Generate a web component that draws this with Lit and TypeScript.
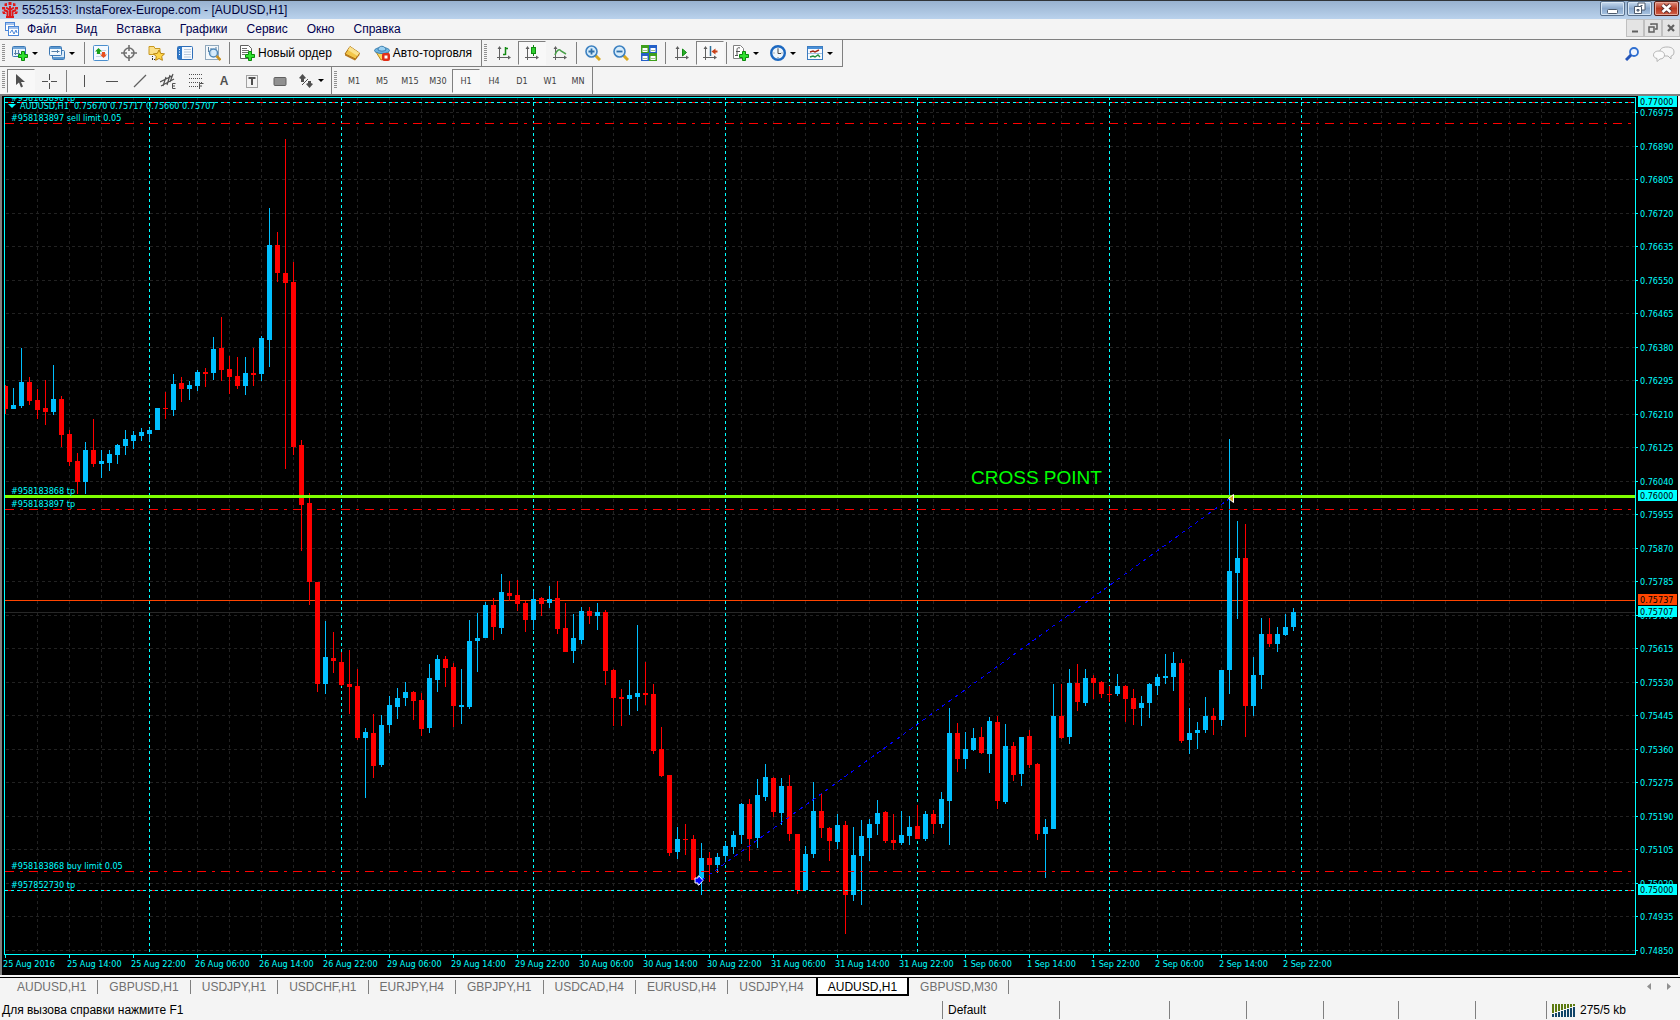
import { LitElement, html, svg, css, type SVGTemplateResult, type TemplateResult } from "lit";
import { customElement, state } from "lit/decorators.js";
import { classMap } from "lit/directives/class-map.js";

/* ---------- chart data ---------- */

/** Window row of the first pixel inside the plot frame. */
const TOP = 98;
/** Window column of the first pixel inside the plot frame. */
const LEFT = 5;
const STEP = 8;

/** kind (U rising, D falling), high, body top, body bottom, low */
const CANDLES = `
D385,386,409,414 U388,405,409,409 U348,382,406,408 D377,382,401,405 D389,400,410,419 D380,408,412,425
U365,399,412,415 D396,399,435,447 D430,434,462,466 D453,461,482,494 U442,450,482,494 D419,450,464,467
U450,461,464,478 U450,454,463,471 U444,445,455,464 U430,439,446,455 U431,435,441,449 U428,432,436,441
U428,430,434,441 U408,408,430,430 D392,408,409,419 U374,384,410,416 D377,383,389,402 U381,385,389,400
U370,372,386,391 D368,372,374,387 U337,349,373,380 D317,348,370,381 D356,369,377,394 D357,376,386,389
U357,373,386,395 D348,373,375,386 U336,338,374,381 U208,245,340,367 D232,245,273,282 D139,273,283,469
D262,282,447,455 D440,445,505,551 D493,503,582,605 D582,582,684,692 U621,657,684,694 D632,658,661,673
D652,662,685,686 D650,684,687,714 D669,686,738,740 U728,732,738,798 D714,733,766,778 U715,725,765,767
U696,705,725,733 U688,698,707,719 U682,692,698,706 D691,692,701,720 D693,700,729,736 U664,678,728,733
U655,659,680,692 D656,659,668,687 D663,667,706,727 U669,705,707,724 U620,641,707,709 U613,638,641,672
U602,605,638,638 D598,605,627,640 U574,592,628,634 D581,593,596,601 D580,595,604,611 D601,603,620,632
U591,599,620,630 D597,598,604,616 U586,599,603,608 D581,598,629,634 D603,628,652,652 U614,638,651,663
U607,611,640,644 D607,611,616,624 U603,612,616,630 D610,612,671,685 D669,670,698,726 D689,697,699,726
U680,695,699,715 U625,693,697,711 D662,693,695,705 D684,694,751,754 D727,749,776,777 D775,775,853,856
U827,839,852,859 D824,839,840,855 D835,839,880,880 U843,858,879,895 D852,858,865,882 U853,857,865,873
U842,846,856,862 U831,835,847,854 U803,804,835,844 D799,804,839,861 U779,795,838,848 U764,777,797,801
D777,778,812,817 U778,786,813,825 D775,786,834,841 D834,834,890,894 U846,854,890,890 U782,811,854,858
D794,811,828,838 D827,828,841,861 U814,825,842,849 D821,825,895,934 U827,855,895,901 U820,836,856,905
U819,824,838,861 U800,813,824,835 D811,812,841,843 D814,840,843,850 U811,835,843,845 U816,827,836,845
D805,826,839,839 U811,814,839,841 D810,814,824,834 U792,799,824,828 U708,733,801,845 D723,733,759,772
U732,749,759,769 U728,738,750,751 D727,737,753,754 U717,721,754,773 D716,722,801,809 U724,746,802,804
D742,746,775,781 U737,737,774,786 D730,736,765,768 D763,764,834,840 U819,827,834,878 U684,716,829,829
D684,716,738,739 U669,683,737,744 D664,683,702,711 U669,678,703,706 D675,678,683,699 D681,682,694,698
D686,694,695,702 U674,686,694,696 D685,686,699,722 D689,698,709,725 U696,703,708,726 U683,684,703,718
U674,677,686,695 U654,676,678,684 U652,663,677,691 D659,663,741,743 U708,733,740,754 U722,730,733,749
U697,716,730,733 D708,716,720,735 U670,670,720,726 U439,571,670,694 U521,558,573,619 D524,558,706,737
U657,675,706,716 U618,634,675,689 D618,634,644,647 U627,634,644,652 U614,627,635,636 U608,612,627,631`
  .trim()
  .split(/\s+/)
  .map((item) => ({ up: item[0] === "U", v: item.slice(1).split(",").map(Number) }));

const GRID_ROWS = Array.from({ length: 26 }, (_, k) => ({
  y: Math.ceil(112 + 33.5 * k) - TOP,
  price: (0.76975 - 0.00085 * k).toFixed(5),
}));
const GRID_COLUMNS = Array.from({ length: 80 }, (_, k) => 32 * k);
const DAY_BREAKS = [149, 341, 533, 725, 917, 1109, 1301];
const TIMES = [
  "25 Aug 2016", "25 Aug 14:00", "25 Aug 22:00", "26 Aug 06:00", "26 Aug 14:00", "26 Aug 22:00",
  "29 Aug 06:00", "29 Aug 14:00", "29 Aug 22:00", "30 Aug 06:00", "30 Aug 14:00", "30 Aug 22:00",
  "31 Aug 06:00", "31 Aug 14:00", "31 Aug 22:00", "1 Sep 06:00", "1 Sep 14:00", "1 Sep 22:00",
  "2 Sep 06:00", "2 Sep 14:00", "2 Sep 22:00",
];
const ORDER_LINES = [102, 123, 509, 871, 890];
const LEVEL_LINES = [102, 890];
const ORDER_LABELS: [number, string][] = [
  [101, "#958183898 tp"],
  [121, "#958183897 sell limit 0.05"],
  [494, "#958183868 tp"],
  [507, "#958183897 tp"],
  [869, "#958183868 buy limit 0.05"],
  [888, "#957852730 tp"],
];
const TAGS: [number, string, string][] = [
  [102, "0.77000", "level"],
  [496, "0.76000", "level"],
  [600, "0.75737", "ask"],
  [612, "0.75707", "level"],
  [890, "0.75000", "level"],
];

/* ---------- icons ---------- */

const icon = (body: SVGTemplateResult, w = 16, h = 16) =>
  html`<svg class="icon" width=${w} height=${h} viewBox="0 0 ${w} ${h}" aria-hidden="true">${body}</svg>`;

const plus = svg`<path d="M9.5 6.5h3v3h3v3h-3v3h-3v-3h-3v-3h3z" fill="#2fe02f" stroke="#0a8a0a"/>`;
const axes = svg`<path d="M3.5 2v13M1 12.500h13" stroke="#606060" fill="none"/><path d="M3.500 1l-2 3h4zM15 12.500l-3-2v4z" fill="#606060"/>`;

const ICONS: Record<string, TemplateResult> = {
  logo: icon(svg`<g fill="none" stroke="#e01818" stroke-width="2"><path d="M8 4v11M8 8L4 5.500M8 8l4-2.500M5.500 15V9.500L2 8M10.500 15V9.500L14 8"/></g><path d="M6.500 0h3v3h-3zM2.500 1.500L5 1v3H2.500zM11 1l2.500.5V4H11zM0 5h3v2.500H0zM13 5h3v2.500h-3zM0 9.500h2.500L4 12H1zM13.500 9.500H16L15 12h-3zM4 14h8v2H4z" fill="#e01818"/>`),
  sheet: icon(svg`<rect x="1.500" y="1.500" width="9" height="8" fill="#fff" stroke="#4a86d8"/><path d="M2 3h8" stroke="#4a86d8"/><rect x="4.500" y="5.500" width="10" height="9" fill="#fff" stroke="#4a86d8"/><path d="M5 7h9" stroke="#4a86d8"/><path d="M6 12l2-3 2 4 2-4 1 3" stroke="#4a86d8" fill="none"/>`),
  newChart: icon(svg`<rect x=".5" y="1.500" width="13" height="10" rx="1" fill="#e8f3fc" stroke="#3c78b4"/><path d="M1 3h12" stroke="#6fa5d8" stroke-width="2"/><path d="M3.500 5v5M2 8.500h6M6.500 5v3" stroke="#5580a8" fill="none"/>${plus}`),
  profiles: icon(svg`<rect x="3.500" y="5.500" width="12" height="9" rx="1" fill="#dcebf8" stroke="#3c78b4"/><path d="M4 13h11" stroke="#5b98d0" stroke-width="2"/><rect x=".5" y="1.500" width="12" height="9" rx="1" fill="#f2f8fd" stroke="#3c78b4"/><path d="M1 3h11" stroke="#5b98d0" stroke-width="2"/><path d="M2.500 6.500h8M8.500 5v3" stroke="#5580a8"/>`),
  market: icon(svg`<rect x=".5" y=".5" width="15" height="15" rx="1" fill="#f4f9ff" stroke="#4b8fce"/><path d="M3 5.500h10M3 8.500h10M3 11.500h10" stroke="#c5d6e8"/><path d="M5.500 3L9 6.500H7V9H4V6.500H2z" fill="#18a018"/><path d="M10.500 13L7 9.500h2V7h3v2.500h2z" fill="#e85020"/>`),
  cross: icon(svg`<circle cx="8" cy="8" r="5" fill="none" stroke="#707070" stroke-width="1.600"/><path d="M8 0v6M8 10v6M0 8h6M10 8h6" stroke="#707070" stroke-width="1.600"/>`),
  folder: icon(svg`<path d="M1 3.500V1.500h5l1 2h5v6H1z" fill="#fbe08a" stroke="#c89820"/><path d="M4.500 11v4M4 14.500h4" stroke="#333" stroke-dasharray="1 1"/><path d="M11 5l1.700 3.400 3.800.5-2.800 2.600.7 3.800L11 13.500 7.600 15.300l.7-3.800L5.500 8.900l3.800-.5z" fill="#ffd648" stroke="#b88410"/>`, 18),
  navigator: icon(svg`<rect x=".5" y="1.500" width="15" height="13" rx="1" fill="#f6faff" stroke="#2f6fb8"/><rect x="1" y="2" width="4" height="12" fill="#2f78c8"/><path d="M7 4.500h7M7 7h7M7 9.500h7M7 12h7" stroke="#b9c8da"/><path d="M2 4.500h1M2 7h1M2 9.500h1" stroke="#fff"/>`),
  tester: icon(svg`<rect x=".5" y=".5" width="13" height="14" fill="#f4f8fb" stroke="#90a8bc"/><path d="M3.500 2v5M6 3v7M11 2v4" stroke="#5a7fa0"/><circle cx="8.500" cy="8" r="4" fill="#cfe8fa" fill-opacity=".85" stroke="#5088b8" stroke-width="1.500"/><path d="M11.500 11l4 4" stroke="#c89020" stroke-width="2.500"/>`),
  order: icon(svg`<path d="M1.500.5h8l3 3v10h-11z" fill="#fff" stroke="#606060"/><path d="M3 3.500h5M3 5.500h7M3 7.500h6M3 9.500h3" stroke="#707070"/>${plus}`),
  editor: icon(svg`<path d="M1 9L6 1.500l9.500 6.500-4 6z" fill="#f3c648" stroke="#a86c10"/><path d="M6 1.500l9.500 6.500-2 3L4 5z" fill="#fbe28c"/><path d="M1 9v1.500L11 15.500l.5-1.500zM11.500 14l4-6v2L11 15.500z" fill="#b87818"/>`, 17),
  auto: icon(svg`<path d="M2 7l5 8 8-3-1-6z" fill="#fbd65c" stroke="#b88818"/><ellipse cx="8" cy="5.500" rx="7.500" ry="3" fill="#6db4e0" stroke="#3a7fb0"/><path d="M4 5c0-5 7.500-5 8 0-2 1.500-6 1.500-8 0z" fill="#9bd0f0" stroke="#3a7fb0"/><rect x="8" y="8" width="8" height="8" rx="2" fill="#e03018"/><rect x="10.500" y="10.500" width="3" height="3" fill="#fff"/>`),
  bars: icon(svg`${axes}<path d="M9.500 2v8M9.500 3.500H12M7 9.500h2.500" stroke="#128a12" stroke-width="1.500" fill="none"/>`),
  candles: icon(svg`${axes}<path d="M9.500 0v11" stroke="#128a12"/><rect x="7.500" y="2.500" width="4" height="6" fill="#2fd02f" stroke="#128a12"/>`),
  line: icon(svg`${axes}<path d="M3 10c2-6 5-6 6-4l5 3" stroke="#4aa04a" stroke-width="1.500" fill="none"/>`),
  zoomIn: icon(svg`<path d="M10 10l5 5" stroke="#d8a820" stroke-width="3"/><circle cx="6.500" cy="6.500" r="5.500" fill="#d6ecfb" stroke="#3c80c0" stroke-width="1.600"/><path d="M3.500 6.500h6M6.500 3.500v6" stroke="#2f6fa8" stroke-width="1.800"/>`),
  zoomOut: icon(svg`<path d="M10 10l5 5" stroke="#d8a820" stroke-width="3"/><circle cx="6.500" cy="6.500" r="5.500" fill="#d6ecfb" stroke="#3c80c0" stroke-width="1.600"/><path d="M3.500 6.500h6" stroke="#2f6fa8" stroke-width="1.800"/>`),
  tile: icon(svg`<rect width="8" height="8" fill="#3fa01c"/><rect x="8" width="8" height="8" fill="#2460c8"/><rect y="8" width="8" height="8" fill="#2460c8"/><rect x="8" y="8" width="8" height="8" fill="#3fa01c"/><path d="M1.500 3h5v4h-5zM9.500 3h5v4h-5zM1.500 11h5v4h-5zM9.500 11h5v4h-5z" fill="#fff"/><path d="M2 5.500h4M10 5.500h4M2 13.500h4M10 13.500h4" stroke="#9cc08c"/>`),
  scroll: icon(svg`${axes}<path d="M8.500 4l4 3.500-4 3.500z" fill="#28b028" stroke="#128a12"/>`),
  shift: icon(svg`${axes}<path d="M8.500 1v10" stroke="#2f6f98" stroke-width="1.500"/><path d="M9.500 6.500l4-3v2h2v2h-2v2z" fill="#c84018"/>`),
  indicators: icon(svg`<path d="M.5.5h7l3 3v10H.5z" fill="#fff" stroke="#808080"/><path d="M7 3c-3-1-3 1-3 3v4M3 6.500h4M5 10.500H2" stroke="#505050" fill="none"/>${plus}`),
  clock: icon(svg`<circle cx="8" cy="8" r="6.800" fill="#eef6fc" stroke="#1c68c0" stroke-width="2.400"/><path d="M8 4v4.500h3" stroke="#444" fill="none"/><path d="M8 3v1M8 12v1M3.500 8h1M11.500 8h1" stroke="#777"/>`),
  template: icon(svg`<rect x=".5" y="1.500" width="15" height="13" fill="#f8fbff" stroke="#3c7cc0"/><path d="M1 3h14" stroke="#4a90d8" stroke-width="2"/><path d="M3 7l3-1 2 1 4-2" stroke="#a02818" fill="none" stroke-width="1.400"/><path d="M1 8.500h14" stroke="#a0c0e0"/><path d="M3 12l3-1 2 1 3-2 2 2" stroke="#20903c" fill="none" stroke-width="1.400"/>`),
  find: icon(svg`<circle cx="9" cy="5" r="4" fill="#eef4ff" stroke="#2f6fd0" stroke-width="1.800"/><path d="M6 8l-5 5" stroke="#2454b8" stroke-width="3"/>`, 14, 14),
  chat: icon(svg`<path d="M14 1c5 0 7 2 7 5s-2 4-3 4v3l-3-3h-2c-4 0-6-2-6-4.500S9 1 14 1z" fill="#f6f6f6" stroke="#b4b4b4"/><path d="M6 5c4 0 5.500 2 5.500 4S10 13 7 13l-3 2.500V12.500C2 12 .5 11 .5 9S2 5 6 5z" fill="#fafafa" stroke="#b4b4b4"/>`, 22),
  pointer: icon(svg`<path d="M3 1v11l3-2.500 2 5 2-1-2-4.500h4z" fill="#505050"/>`),
  cursorCross: icon(svg`<path d="M8.500 1v6M8.500 10v6M1 8.500h6M10 8.500h6" stroke="#505050"/>`),
  vline: icon(svg`<path d="M8.500 2v12" stroke="#505050"/>`),
  hline: icon(svg`<path d="M2 8.500h12" stroke="#505050"/>`),
  trend: icon(svg`<path d="M2 14L14 2" stroke="#606060" stroke-width="1.300"/>`),
  channel: icon(svg`<path d="M0 9L12 3M1 13L14 6M3 13l3-9M7 12l3-10M10 9l3-8" stroke="#505050" stroke-width="1.200"/><path d="M15.500 10.500h-3v5h3M12.500 13H15" stroke="#505050" fill="none"/>`),
  fibo: icon(svg`<path d="M1 1.500h13M1 5.500h13M1 9.500h13M1 13.500h9" stroke="#505050" stroke-dasharray="1 1"/><path d="M15.500 10.500h-4V16M11.500 13H14" stroke="#505050" fill="none"/>`),
  label: icon(svg`<rect x="2.500" y="2.500" width="11" height="12" fill="none" stroke="#505050" stroke-dasharray="1 1"/><path d="M4.500 5h7M8 5v7" stroke="#505050" stroke-width="2"/>`),
  box: icon(svg`<rect x="2" y="4.500" width="12" height="8" rx="1" fill="#909090" stroke="#606060"/>`),
  arrows: icon(svg`<path d="M4.500 1l3.500 4-2 1v3H3V6L1 5zM11.500 15L8 11l2-1V8h3v2l2 1z" fill="#505050"/><path d="M4 12l6-6" stroke="#505050"/>`),
  signal: icon(svg`${[0, 1, 2, 3, 4, 5, 6, 7].map(
    (i) => svg`<rect x=${i * 3} y="0" width="2" height=${9 - i} fill="#5c7a10"/><rect x=${i * 3} y=${10 - i} width="2" height=${3 + i} fill="#104468"/>`,
  )}`, 23, 13),
  min: icon(svg`<rect x="1.500" y="7.500" width="10" height="4" rx="1" fill="#fff" stroke="#4c5a6c"/>`, 13, 13),
  restore: icon(svg`<path d="M5 1h7v7H5z" fill="#fff" stroke="#4c5a6c"/><path d="M7.500 3.500h2" stroke="#4c5a6c"/><path d="M1.500 4.500h7v7h-7z" fill="#fff" stroke="#4c5a6c"/><path d="M4 7.500h2v1.500H4z" fill="#8aa6c8" stroke="#4c5a6c"/>`, 13, 13),
  close: icon(svg`<path d="M2.500 3l8 7M10.500 3l-8 7" stroke="#5a3030" stroke-width="4.500"/><path d="M2.500 3l8 7M10.500 3l-8 7" stroke="#fff" stroke-width="2.600"/>`, 13, 13),
  mdiMin: icon(svg`<path d="M2 8.500h6" stroke="#606060" stroke-width="2"/>`, 10, 10),
  mdiRestore: icon(svg`<path d="M3 2V1h6v5H7" stroke="#606060" stroke-width="1.500" fill="none"/><rect x="1" y="4" width="5" height="5" stroke="#606060" stroke-width="1.500" fill="none"/>`, 10, 10),
  mdiClose: icon(svg`<path d="M2 2l6 6M8 2L2 8" stroke="#606060" stroke-width="2.200"/>`, 10, 10),
};

const caret = html`<svg class="caret" width="6" height="3" viewBox="0 0 6 3" aria-hidden="true"><path d="M0 0h6L3 3z" fill="#000" /></svg>`;

type Tool = { id: string; name: string; text?: string; menu?: boolean; on?: boolean };
const SEP: Tool = { id: "|", name: "" };
const t = (id: string, name: string, more: Partial<Tool> = {}): Tool => ({ id, name, ...more });

const STANDARD: Tool[] = [
  t("newChart", "Новый график", { menu: true }),
  t("profiles", "Профили", { menu: true }),
  SEP,
  t("market", "Обзор рынка"),
  t("cross", "Окно данных"),
  t("folder", "Навигатор"),
  t("navigator", "Терминал"),
  t("tester", "Тестер стратегий"),
  SEP,
  t("order", "Новый ордер", { text: "Новый ордер" }),
  t("editor", "Редактор"),
  t("auto", "Авто-торговля", { text: "Авто-торговля" }),
];
const CHARTS: Tool[] = [
  t("bars", "Бары"),
  t("candles", "Свечи", { on: true }),
  t("line", "Линия"),
  SEP,
  t("zoomIn", "Приблизить"),
  t("zoomOut", "Отдалить"),
  t("tile", "Окна мозаикой"),
  SEP,
  t("scroll", "Автопрокрутка"),
  t("shift", "Сдвиг графика", { on: true }),
  SEP,
  t("indicators", "Индикаторы", { menu: true }),
  t("clock", "Периоды", { menu: true }),
  t("template", "Шаблоны", { menu: true }),
];
const DRAWING: Tool[] = [
  t("pointer", "Курсор", { on: true }),
  t("cursorCross", "Перекрестие"),
  SEP,
  t("vline", "Вертикальная линия"),
  t("hline", "Горизонтальная линия"),
  t("trend", "Трендовая линия"),
  t("channel", "Канал"),
  t("fibo", "Линии Фибоначчи"),
  t("A", "Текст", { text: "A" }),
  t("label", "Метка"),
  t("box", "Прямоугольник"),
  t("arrows", "Стрелки", { menu: true }),
];
const FRAMES = ["M1", "M5", "M15", "M30", "H1", "H4", "D1", "W1", "MN"];
const MENU = ["Файл", "Вид", "Вставка", "Графики", "Сервис", "Окно", "Справка"];
const TABS = [
  "AUDUSD,H1", "GBPUSD,H1", "USDJPY,H1", "USDCHF,H1", "EURJPY,H4", "GBPJPY,H1",
  "USDCAD,H4", "EURUSD,H4", "USDJPY,H4", "AUDUSD,H1", "GBPUSD,M30",
];

/* ---------- chart ---------- */

@customElement("price-chart")
export class PriceChart extends LitElement {
  static styles = css`
    :host {
      display: grid;
      grid-template-columns: minmax(0, 1fr) 42px;
      grid-template-rows: minmax(0, 1fr) 20px;
      background: #000;
      font: 9px "DejaVu Sans Condensed", "DejaVu Sans", sans-serif;
    }
    .plot {
      border: 1px solid #00ffff;
      overflow: hidden;
      min-height: 0;
    }
    svg {
      display: block;
      width: 100%;
      height: 100%;
      overflow: hidden;
    }
    .axis {
      overflow: visible;
    }
    .shapes {
      shape-rendering: crispEdges;
    }
    .grid {
      stroke: #222222;
      stroke-dasharray: 3 3;
    }
    .day {
      stroke: #00ffff;
      stroke-dasharray: 3 3;
    }
    .bid {
      stroke: #282828;
    }
    .ask-line {
      stroke: #ff4500;
    }
    .up {
      fill: #00bfff;
    }
    .down {
      fill: #ff0000;
    }
    .order {
      stroke: #ff0000;
      stroke-dasharray: 9 6 3 6;
    }
    .level-line {
      stroke: #00ffff;
      stroke-dasharray: 3 3;
    }
    .cross {
      fill: #7fff00;
    }
    .deal {
      stroke: #0000ff;
      stroke-dasharray: 4 4;
    }
    text {
      fill: #00ffff;
    }
    .note {
      fill: #00ff00;
      font: 19px "Liberation Sans", Arial, sans-serif;
    }
    .tick {
      stroke: #00ffff;
    }
    .level {
      fill: #00ffff;
    }
    .ask {
      fill: #ff4500;
    }
    .tag-text {
      fill: #000;
    }
  `;

  private row(y: number, cls: string, x = 0) {
    return svg`<line class=${cls} x1=${x} x2="100%" y1=${y + 0.5} y2=${y + 0.5} />`;
  }

  render() {
    return html`
      <div class="plot">
        <svg role="img" aria-label="AUDUSD,H1">
          <g class="shapes">
            ${GRID_ROWS.map((r) => this.row(r.y, "grid", 1))}
            ${GRID_COLUMNS.slice(1).map((x) => svg`<line class="grid" x1=${x + 0.5} x2=${x + 0.5} y1="-1" y2="100%" />`)}
            ${DAY_BREAKS.map((x) => svg`<line class="day" x1=${x - LEFT + 0.5} x2=${x - LEFT + 0.5} y1="-1" y2="100%" />`)}
            ${this.row(612 - TOP, "bid")} ${this.row(600 - TOP, "ask-line")}
            ${CANDLES.map(({ up, v: [high, top, bottom, low] }, i) => svg`
              <g class=${up ? "up" : "down"}>
                <rect x=${i * STEP} y=${high - TOP} width="1" height=${low - high} />
                <rect x=${i * STEP - 2} y=${top - TOP} width="5" height=${bottom - top} />
              </g>`)}
            ${ORDER_LINES.map((y) => this.row(y - TOP, "order"))}
            ${LEVEL_LINES.map((y) => this.row(y - TOP, "level-line"))}
            <rect class="cross" x="0" y=${495 - TOP} width="100%" height="3" />
            <line class="deal" x1="697" y1="782" x2="1224" y2="401" />
          </g>
          <path d="M690 780h3v-2h1l4 4.500-4 4.500h-1v-2h-3z" fill="#0000ff" stroke="#fff" />
          <path d="M1228.500 396.500v8l-5-4z" fill="#daa520" stroke="#fff" />
          <path d="M3 6h8L7 10z" fill="#00ffff" />
          <text x="15" y="11">AUDUSD,H1&nbsp; 0.75670 0.75717 0.75660 0.75707</text>
          ${ORDER_LABELS.map(([y, label]) => svg`<text x="6" y=${y - TOP}>${label}</text>`)}
          <text class="note" x="966" y="386">CROSS POINT</text>
        </svg>
      </div>
      <svg class="axis">
        ${GRID_ROWS.map((r) => svg`
          <line class="tick shapes" x1="0" x2="2" y1=${r.y + 1.5} y2=${r.y + 1.5} />
          <text x="4" y=${r.y + 5}>${r.price}</text>`)}
        ${TAGS.map(([y, label, cls]) => svg`
          <rect class=${cls} x="2" y=${y - 6 - TOP + 1} width="39" height="11" />
          <text class="tag-text" x="4" y=${y - TOP + 4}>${label}</text>`)}
      </svg>
      <svg class="axis">
        ${TIMES.map((label, k) => svg`
          <line class="tick shapes" x1=${k * 64 + 1.5} x2=${k * 64 + 1.5} y1="0" y2="3" />
          <text x=${k * 64 - 1} y="12">${label}</text>`)}
      </svg>
    `;
  }
}

/* ---------- terminal window ---------- */

@customElement("app-root")
export class AppRoot extends LitElement {
  @state() private tab = 9;
  @state() private frame = "H1";

  static styles = css`
    :host {
      display: flex;
      flex-direction: column;
      height: 100vh;
      min-height: 400px;
      overflow: hidden;
      background: #f4f4f4;
      color: #000;
      font: 12px "Liberation Sans", Arial, sans-serif;
    }
    button {
      display: inline-flex;
      align-items: center;
      justify-content: center;
      margin: 0;
      padding: 0;
      border: 0;
      background: none;
      color: inherit;
      font: inherit;
      white-space: nowrap;
    }
    .icon,
    .caret {
      display: block;
      flex: none;
    }
    .title {
      display: flex;
      align-items: center;
      gap: 4px;
      height: 18px;
      padding-left: 2px;
      border-top: 1px solid #303438;
      background: linear-gradient(#98b2d0, #bad2ec);
      color: #000038;
    }
    .window {
      display: flex;
      gap: 2px;
      margin-left: auto;
      padding-right: 1px;
      align-self: flex-start;
    }
    .window button {
      box-sizing: border-box;
      width: 25px;
      height: 15px;
      border: 1px solid #58708c;
      border-radius: 2px;
      background: linear-gradient(#c8dcf0, #8aa8cc 50%, #a8c4e2);
      box-shadow: inset 0 0 0 1px #d8e6f4;
    }
    .window .quit {
      border-color: #5c2018;
      background: linear-gradient(#e09080, #b83820 50%, #d06048);
      box-shadow: inset 0 0 0 1px #e8a898;
    }
    .menu {
      display: flex;
      align-items: center;
      gap: 1px;
      height: 20px;
      padding-left: 4px;
      border-bottom: 1px solid #808080;
      color: #000050;
    }
    .menu .item {
      padding: 0 9px;
    }
    .menu .icon {
      margin-right: -3px;
    }
    .mdi {
      display: flex;
      align-self: flex-start;
      margin-left: auto;
      background: #c0c0c0;
    }
    .mdi button {
      width: 16px;
      height: 16px;
      margin: 1px;
      background: #e4e4e4;
    }
    .menu .mdi .icon {
      margin: 0;
    }
    .bars {
      display: flex;
      height: 27px;
    }
    .bar {
      display: flex;
      align-items: center;
      box-sizing: border-box;
      padding: 0 2px 0 8px;
      border-right: 1px solid #808080;
      border-bottom: 1px solid #808080;
      background: repeating-linear-gradient(#909090 0 1px, #f4f4f4 1px 2px) 2px 4px / 3px 18px no-repeat;
    }
    .lower {
      border-bottom: 2px solid #808080;
    }
    .lower .bar {
      padding-right: 0;
      border-bottom: 0;
    }
    .lower .bar:first-child {
      padding-left: 7px;
    }
    .lower .sep {
      margin: 0 3px;
    }
    .corner {
      display: flex;
      align-items: center;
      gap: 14px;
      margin-left: auto;
      padding-right: 5px;
    }
    .tool {
      box-sizing: border-box;
      width: 28px;
      height: 24px;
      border: 1px solid transparent;
    }
    .with-menu {
      justify-content: flex-start;
      gap: 4px;
      width: 37px;
      padding-left: 3px;
    }
    .with-text {
      gap: 3px;
      width: auto;
      padding: 0 6px;
    }
    .glyph {
      width: 28px;
      padding: 0;
      color: #505050;
      font-weight: bold;
    }
    .on {
      border-color: #808080 transparent transparent #808080;
      background: #f8f8f8;
    }
    .sep {
      flex: none;
      width: 1px;
      height: 22px;
      margin: 0 2px;
      background: #808080;
    }
    .frame {
      color: #404040;
      font: 9px "DejaVu Sans Condensed", "DejaVu Sans", sans-serif;
    }
    .view {
      flex: 1;
      min-height: 0;
      display: flex;
      box-sizing: border-box;
      padding: 1px 0 0 2px;
      margin-right: 2px;
      border-left: 2px solid #808080;
      background: #000;
    }
    price-chart {
      flex: 1;
      min-width: 0;
    }
    .tabs {
      display: flex;
      align-items: flex-start;
      height: 21px;
      margin-top: 2px;
      padding-left: 6px;
      border-top: 1px solid #000;
      color: #707070;
    }
    .tab {
      position: relative;
      height: 17px;
      padding: 0 12px 0 11px;
    }
    .tab::after {
      content: "";
      position: absolute;
      right: 0;
      top: 2px;
      width: 1px;
      height: 14px;
      background: #808080;
    }
    .tab.current {
      box-sizing: border-box;
      height: 18px;
      border: solid #000;
      border-width: 0 2px 2px;
      padding: 1px 10px 0;
      background: #fff;
      color: #000;
    }
    .tab.current::after,
    .tab.before::after {
      content: none;
    }
    .scrollers {
      display: flex;
      gap: 14px;
      margin: 5px 9px 0 auto;
    }
    .status {
      display: grid;
      grid-template-columns: minmax(0, 1fr) 117px 110px 77px 77px 75px 77px 71px 134px;
      height: 20px;
      padding-top: 1px;
      align-items: center;
    }
    .cell {
      display: flex;
      align-items: center;
      gap: 5px;
      height: 18px;
      padding-left: 5px;
      border-left: 1px solid #808080;
      white-space: nowrap;
    }
    .help {
      padding-left: 2px;
      border-left: 0;
    }
  `;

  private tool(item: Tool) {
    if (item.id === "|") return html`<span class="sep"></span>`;
    const glyph = item.text?.length === 1;
    const cls = classMap({ tool: true, on: !!item.on, "with-menu": !!item.menu, "with-text": !!item.text, glyph });
    return html`<button class=${cls} aria-label=${item.name}>${ICONS[item.id] ?? ""}${item.text ?? ""}${item.menu ? caret : ""}</button>`;
  }

  render() {
    return html`
      <header class="title">
        ${ICONS.logo}<span>5525153: InstaForex-Europe.com - [AUDUSD,H1]</span>
        <div class="window">
          <button aria-label="Свернуть">${ICONS.min}</button>
          <button aria-label="Восстановить">${ICONS.restore}</button>
          <button class="quit" aria-label="Закрыть">${ICONS.close}</button>
        </div>
      </header>
      <nav class="menu">
        ${ICONS.sheet}${MENU.map((m) => html`<button class="item">${m}</button>`)}
        <div class="mdi">
          <button aria-label="Свернуть график">${ICONS.mdiMin}</button>
          <button aria-label="Восстановить график">${ICONS.mdiRestore}</button>
          <button aria-label="Закрыть график">${ICONS.mdiClose}</button>
        </div>
      </nav>
      <div class="bars">
        <div class="bar">${STANDARD.map((i) => this.tool(i))}</div>
        <div class="bar">${CHARTS.map((i) => this.tool(i))}</div>
        <div class="corner">
          <button aria-label="Поиск">${ICONS.find}</button>
          <button aria-label="Сообщения">${ICONS.chat}</button>
        </div>
      </div>
      <div class="bars lower">
        <div class="bar">${DRAWING.map((i) => this.tool(i))}</div>
        <div class="bar">
          ${FRAMES.map((f) => html`<button class=${classMap({ tool: true, frame: true, on: f === this.frame })} @click=${() => (this.frame = f)}>${f}</button>`)}
        </div>
      </div>
      <main class="view"><price-chart></price-chart></main>
      <nav class="tabs">
        ${TABS.map((name, i) => html`<button
          class=${classMap({ tab: true, current: i === this.tab, before: i === this.tab - 1 })}
          @click=${() => (this.tab = i)}
        >${name}</button>`)}
        <div class="scrollers">
          <button aria-label="Назад"><svg class="icon" width="5" height="7" viewBox="0 0 5 7"><path d="M4 0v7L0 3.500z" fill="#909090" /></svg></button>
          <button aria-label="Вперёд"><svg class="icon" width="5" height="7" viewBox="0 0 5 7"><path d="M1 0v7l4-3.500z" fill="#909090" /></svg></button>
        </div>
      </nav>
      <footer class="status">
        <span class="cell help">Для вызова справки нажмите F1</span>
        <span class="cell">Default</span>
        <span class="cell"></span><span class="cell"></span><span class="cell"></span>
        <span class="cell"></span><span class="cell"></span><span class="cell"></span>
        <span class="cell">${ICONS.signal}275/5 kb</span>
      </footer>
    `;
  }
}
